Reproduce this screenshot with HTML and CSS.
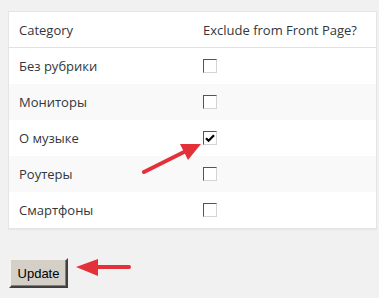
FILE: index.html
```html
<!DOCTYPE html>
<html>
<head>
<meta charset="utf-8">
<link rel="stylesheet" href="styles.css">
</head>
<body>
<div class="page">
  <table class="cats">
    <thead>
      <tr><th class="c1">Category</th><th class="c2">Exclude from Front Page?</th></tr>
    </thead>
    <tbody>
      <tr><td class="c1">Без рубрики</td><td class="c2"><span class="cb"></span></td></tr>
      <tr class="alt"><td class="c1">Мониторы</td><td class="c2"><span class="cb"></span></td></tr>
      <tr><td class="c1">О музыке</td><td class="c2"><span class="cb checked"><svg viewBox="0 0 12 12" width="12" height="12"><path d="M2 6.2 L4.6 8.8 L10 3.2" fill="none" stroke="#000" stroke-width="2.2"/></svg></span></td></tr>
      <tr class="alt"><td class="c1">Роутеры</td><td class="c2"><span class="cb"></span></td></tr>
      <tr><td class="c1">Смартфоны</td><td class="c2"><span class="cb"></span></td></tr>
    </tbody>
  </table>
  <div class="actions"><button class="btn">Update</button></div>
</div>
<svg class="arrow arrow1" width="379" height="298" viewBox="0 0 379 298">
  <line x1="144" y1="172" x2="186" y2="151" stroke="#e3313a" stroke-width="4" stroke-linecap="round"/>
  <polygon points="201,144 180,144 188,160" fill="#e3313a"/>
</svg>
<svg class="arrow arrow2" width="379" height="298" viewBox="0 0 379 298">
  <line x1="93" y1="267" x2="129" y2="267" stroke="#e3313a" stroke-width="4" stroke-linecap="round"/>
  <polygon points="76,267 98,259 98,276" fill="#e3313a"/>
</svg>
</body>
</html>
```
FILE: styles.css
```css
html, body {
  margin: 0;
  padding: 0;
  background: #f1f1f1;
}
body {
  font-family: "Open Sans", "Liberation Sans", sans-serif;
  font-size: 13px;
  color: #32373c;
  position: relative;
  width: 379px;
  height: 298px;
  overflow: hidden;
}
.page {
  padding: 11px 0 0 8px;
}
.cats {
  width: 369px;
  table-layout: fixed;
  border-collapse: collapse;
  background: #fff;
  border: 1px solid #e5e5e5;
  box-shadow: 0 1px 1px rgba(0,0,0,0.04);
}
.cats th, .cats td {
  text-align: left;
  font-weight: normal;
  height: 35px;
  padding: 0 0 0 10px;
  vertical-align: middle;
  line-height: 18px;
  white-space: nowrap;
}
.cats thead th {
  border-bottom: 1px solid #e1e1e1;
  height: 35px;
}
.cats .c1 { width: 174px; }
.cats tbody td { height: 36px; }
.cats tr.alt td { background: #f9f9f9; }
.cb {
  display: block;
  box-sizing: border-box;
  width: 14px;
  height: 14px;
  border-top: 1px solid #555;
  border-left: 1px solid #555;
  border-right: 1px solid #d4d4d4;
  border-bottom: 1px solid #d4d4d4;
  background: #fff;
  position: relative;
}
.cb svg {
  position: absolute;
  left: 0;
  top: 0;
}
.actions {
  padding-top: 29px;
}
.btn {
  font-family: "Liberation Sans", Arial, sans-serif;
  font-size: 13px;
  color: #000;
  background: #d4d0c8;
  width: 59px;
  height: 30px;
  margin-left: 1px;
  padding: 0;
  border: 2px solid;
  border-color: #f4f2ee #404040 #404040 #f4f2ee;
  box-shadow: inset -1px -1px 0 #808080;
}
.arrow {
  position: absolute;
  left: 0;
  top: 0;
  pointer-events: none;
}
```
